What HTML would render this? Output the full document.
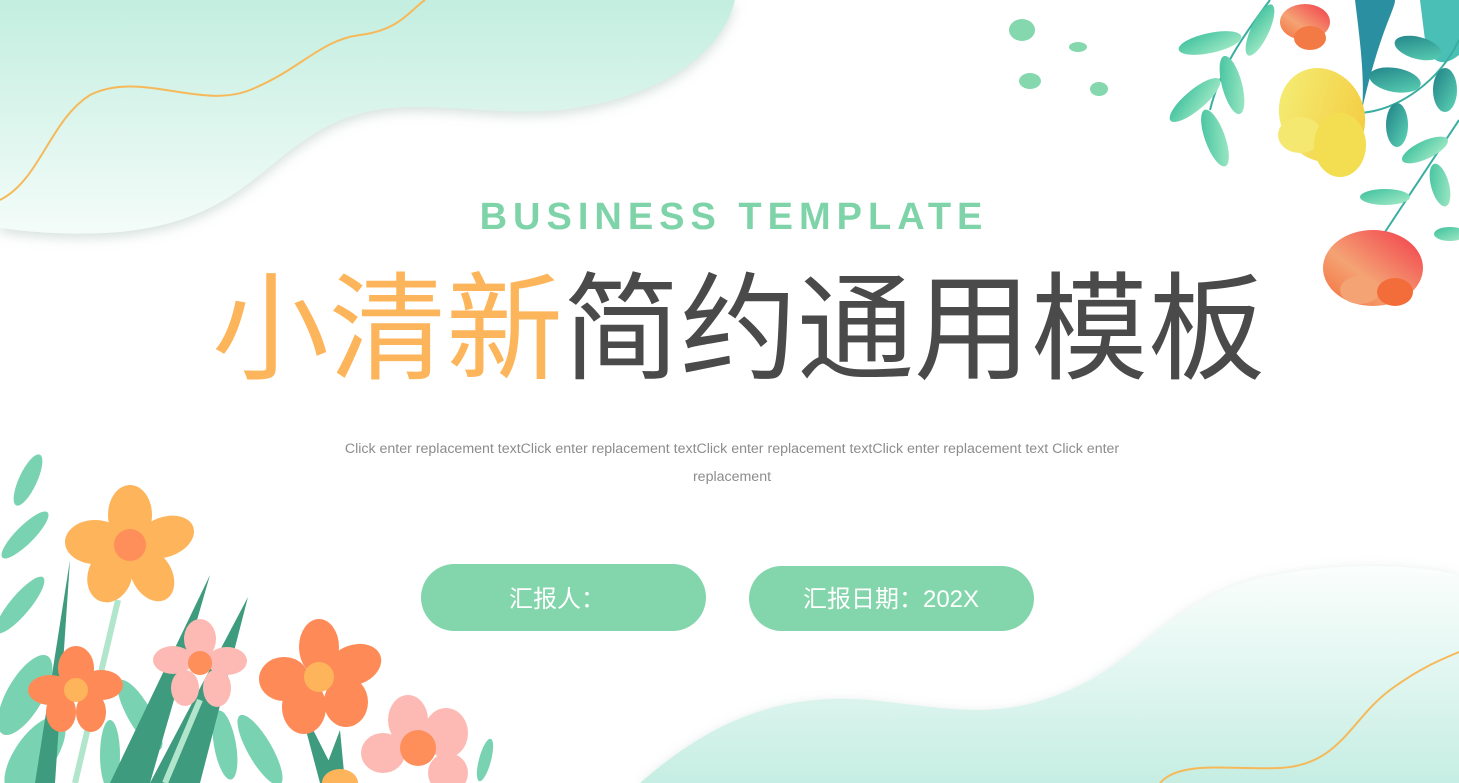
<!DOCTYPE html>
<html><head><meta charset="utf-8"><style>
html,body{margin:0;padding:0;width:1459px;height:783px;overflow:hidden;background:#fff}
svg{position:absolute;left:0;top:0}
.t{font-family:"Liberation Sans","Noto Sans CJK SC",sans-serif}
</style></head><body>
<svg width="1459" height="783" viewBox="0 0 1459 783">
<defs>
<linearGradient id="g1" x1="0" y1="0" x2="0" y2="1"><stop offset="0" stop-color="#c3eee0"/><stop offset="1" stop-color="#f4fcf9"/></linearGradient>
<linearGradient id="g2" x1="0" y1="0" x2="0" y2="1"><stop offset="0" stop-color="#fbfefd"/><stop offset="1" stop-color="#c6eee3"/></linearGradient>
<filter id="sh" x="-10%" y="-10%" width="120%" height="130%"><feDropShadow dx="0" dy="4" stdDeviation="6" flood-color="#9fb9b2" flood-opacity="0.45"/></filter>
<linearGradient id="yl" x1="0" y1="0" x2="1" y2="1"><stop offset="0" stop-color="#f5f07a"/><stop offset="1" stop-color="#f3c83a"/></linearGradient>
<linearGradient id="rd" x1="1" y1="0" x2="0" y2="1"><stop offset="0" stop-color="#f23a4a"/><stop offset="0.6" stop-color="#f4a374"/><stop offset="1" stop-color="#f36d3a"/></linearGradient>
<linearGradient id="lf" x1="0" y1="0" x2="1" y2="1"><stop offset="0" stop-color="#3bbf9c"/><stop offset="1" stop-color="#a8ecc8"/></linearGradient>
<linearGradient id="lf2" x1="0" y1="0" x2="1" y2="1"><stop offset="0" stop-color="#1e7f86"/><stop offset="1" stop-color="#5fd6b6"/></linearGradient>
</defs>
<path filter="url(#sh)" fill="url(#g1)" d="M0 0 H735 C720 60 650 100 560 110 C470 118 400 90 330 125 C260 160 240 220 120 232 C70 236 30 232 0 228 Z"/>
<path fill="none" stroke="#f6b95a" stroke-width="2" d="M0 200 C40 180 50 120 90 95 C140 70 200 110 250 90 C300 70 320 40 360 35 C400 30 410 10 425 0"/>
<path filter="url(#sh)" fill="url(#g2)" d="M640 783 C690 740 760 690 870 700 C960 710 1000 720 1070 690 C1140 660 1170 600 1260 578 C1340 560 1420 565 1459 575 V783 Z"/>
<path fill="none" stroke="#f6b95a" stroke-width="2" d="M1160 783 C1180 760 1230 770 1280 768 C1340 765 1350 720 1390 690 C1420 668 1440 660 1459 652"/>
<ellipse cx="1022" cy="30" rx="13" ry="11" fill="#85d8ae"/>
<ellipse cx="1078" cy="47" rx="9" ry="5" fill="#85d8ae"/>
<ellipse cx="1030" cy="81" rx="11" ry="8" fill="#85d8ae"/>
<ellipse cx="1099" cy="89" rx="9" ry="7" fill="#85d8ae"/>
<path d="M1270 0 C1240 40 1220 70 1210 110" stroke="#3aaea0" stroke-width="2" fill="none"/>
<ellipse cx="1210" cy="43" rx="32" ry="10" transform="rotate(-12 1210 43)" fill="url(#lf)"/>
<ellipse cx="1260" cy="30" rx="9" ry="28" transform="rotate(25 1260 30)" fill="url(#lf)"/>
<ellipse cx="1195" cy="100" rx="32" ry="10" transform="rotate(-40 1195 100)" fill="url(#lf)"/>
<ellipse cx="1232" cy="85" rx="10" ry="30" transform="rotate(-15 1232 85)" fill="url(#lf)"/>
<ellipse cx="1215" cy="138" rx="10" ry="30" transform="rotate(-20 1215 138)" fill="url(#lf)"/>
<path d="M1355 0 C1360 40 1365 80 1362 110 C1380 30 1395 10 1395 0Z" fill="#2a8fa0"/>
<path d="M1420 0 L1459 0 L1459 55 C1440 70 1430 60 1425 40Z" fill="#49bfb6"/>
<path d="M1360 113 C1400 110 1440 80 1459 40" stroke="#3aaea0" stroke-width="2" fill="none"/>
<ellipse cx="1418" cy="48" rx="24" ry="11" transform="rotate(15 1418 48)" fill="url(#lf2)"/>
<ellipse cx="1395" cy="80" rx="26" ry="12" transform="rotate(10 1395 80)" fill="url(#lf2)"/>
<ellipse cx="1445" cy="90" rx="12" ry="22" fill="url(#lf2)"/>
<ellipse cx="1397" cy="125" rx="11" ry="22" fill="url(#lf2)"/>
<path d="M1459 120 L1385 232" stroke="#3aaea0" stroke-width="2"/>
<ellipse cx="1425" cy="150" rx="25" ry="9" transform="rotate(-25 1425 150)" fill="url(#lf)"/>
<ellipse cx="1440" cy="185" rx="9" ry="22" transform="rotate(-15 1440 185)" fill="url(#lf)"/>
<ellipse cx="1385" cy="197" rx="25" ry="8" fill="url(#lf)"/>
<ellipse cx="1450" cy="234" rx="16" ry="7" fill="url(#lf)"/>
<g><ellipse cx="1305" cy="22" rx="25" ry="18" fill="url(#rd)"/><ellipse cx="1310" cy="38" rx="16" ry="12" fill="#f47a45"/></g>
<g><ellipse cx="1322" cy="115" rx="42" ry="48" transform="rotate(-25 1322 115)" fill="url(#yl)"/><ellipse cx="1300" cy="135" rx="22" ry="18" fill="#f5e870"/><ellipse cx="1340" cy="145" rx="26" ry="32" fill="#f3de52"/></g>
<g><ellipse cx="1373" cy="268" rx="50" ry="38" fill="url(#rd)"/><ellipse cx="1360" cy="290" rx="20" ry="14" fill="#f4a374"/><ellipse cx="1395" cy="292" rx="18" ry="14" fill="#f36d3a"/></g>
<g fill="#79d3b3">
<ellipse cx="28" cy="480" rx="9" ry="28" transform="rotate(25 28 480)"/>
<ellipse cx="25" cy="535" rx="9" ry="32" transform="rotate(45 25 535)"/>
<ellipse cx="20" cy="605" rx="10" ry="36" transform="rotate(40 20 605)"/>
<ellipse cx="25" cy="695" rx="18" ry="45" transform="rotate(30 25 695)"/>
<ellipse cx="35" cy="755" rx="20" ry="45" transform="rotate(35 35 755)"/>
<ellipse cx="140" cy="715" rx="12" ry="40" transform="rotate(-30 140 715)"/>
<ellipse cx="110" cy="755" rx="10" ry="35"/>
<ellipse cx="225" cy="745" rx="11" ry="35" transform="rotate(-10 225 745)"/>
<ellipse cx="260" cy="750" rx="12" ry="40" transform="rotate(-30 260 750)"/>
<ellipse cx="485" cy="760" rx="6" ry="22" transform="rotate(15 485 760)"/>
</g>
<g fill="#3e9b7e">
<path d="M35 783 L70 560 L55 783Z"/>
<path d="M110 783 L210 575 L150 783Z"/>
<path d="M150 783 L248 597 L200 783Z"/>
<path d="M320 783 L298 700 L340 783Z"/>
<path d="M320 783 L340 730 L345 783Z"/>
</g>
<g stroke="#b1e6cc" stroke-width="6" fill="none"><path d="M118 600 L75 783"/><path d="M200 700 L165 783"/></g>
<g transform="translate(130 545)"><g fill="#fdb45b"><ellipse cx="0" cy="-30" rx="22" ry="30"/><ellipse cx="35" cy="-8" rx="30" ry="20" transform="rotate(-20 35 -8)"/><ellipse cx="22" cy="30" rx="20" ry="28" transform="rotate(-30 22 30)"/><ellipse cx="-20" cy="30" rx="22" ry="28" transform="rotate(20 -20 30)"/><ellipse cx="-35" cy="-3" rx="30" ry="22"/></g><circle r="16" fill="#fe8e5a"/></g>
<g transform="translate(76 690)"><g fill="#fe8a57"><ellipse cx="0" cy="-22" rx="18" ry="22"/><ellipse cx="25" cy="-5" rx="22" ry="15"/><ellipse cx="15" cy="22" rx="15" ry="20"/><ellipse cx="-15" cy="22" rx="15" ry="20"/><ellipse cx="-26" cy="0" rx="22" ry="15"/></g><circle r="12" fill="#fdb45b"/></g>
<g transform="translate(200 663)"><g fill="#fdbab4"><ellipse cx="0" cy="-24" rx="16" ry="20"/><ellipse cx="27" cy="-2" rx="20" ry="14"/><ellipse cx="17" cy="25" rx="14" ry="19"/><ellipse cx="-15" cy="25" rx="14" ry="18"/><ellipse cx="-27" cy="-3" rx="20" ry="14"/></g><circle r="12" fill="#fe8e5a"/></g>
<g transform="translate(319 677)"><g fill="#fe8a57"><ellipse cx="0" cy="-30" rx="20" ry="28"/><ellipse cx="35" cy="-12" rx="28" ry="20" transform="rotate(-20 35 -12)"/><ellipse cx="27" cy="25" rx="22" ry="25"/><ellipse cx="-15" cy="30" rx="22" ry="27"/><ellipse cx="-35" cy="2" rx="25" ry="22"/></g><circle r="15" fill="#fdb45b"/></g>
<g transform="translate(418 748)"><g fill="#fdbab4"><ellipse cx="-10" cy="-28" rx="20" ry="25"/><ellipse cx="28" cy="-15" rx="22" ry="25"/><ellipse cx="-35" cy="5" rx="22" ry="20"/><ellipse cx="30" cy="25" rx="20" ry="20"/></g><circle r="18" fill="#fe8e5a"/></g>
<ellipse cx="340" cy="783" rx="18" ry="14" fill="#fdb45b"/>
<text class="t" x="734" y="229" text-anchor="middle" font-size="38" font-weight="bold" letter-spacing="6" fill="#7fd3a8">BUSINESS  TEMPLATE</text>
<text class="t" x="212" y="370" font-size="117" fill="#4a4a4a"><tspan fill="#fdb55b">小清新</tspan>简约通用模板</text>
<text class="t" x="732" y="453" text-anchor="middle" font-size="14.2" fill="#8c8c8c">Click enter replacement textClick enter replacement textClick enter replacement textClick enter replacement text Click enter</text>
<text class="t" x="732" y="481" text-anchor="middle" font-size="14.2" fill="#8c8c8c">replacement</text>
<rect x="421" y="564" width="285" height="67" rx="33.5" fill="#83d5ac"/>
<rect x="749" y="566" width="285" height="65" rx="32.5" fill="#83d5ac"/>
<text class="t" x="557" y="607" text-anchor="middle" font-size="24" fill="#fff">汇报人：</text>
<text class="t" x="891" y="607" text-anchor="middle" font-size="24" fill="#fff">汇报日期：202X</text>
</svg>
</body></html>
